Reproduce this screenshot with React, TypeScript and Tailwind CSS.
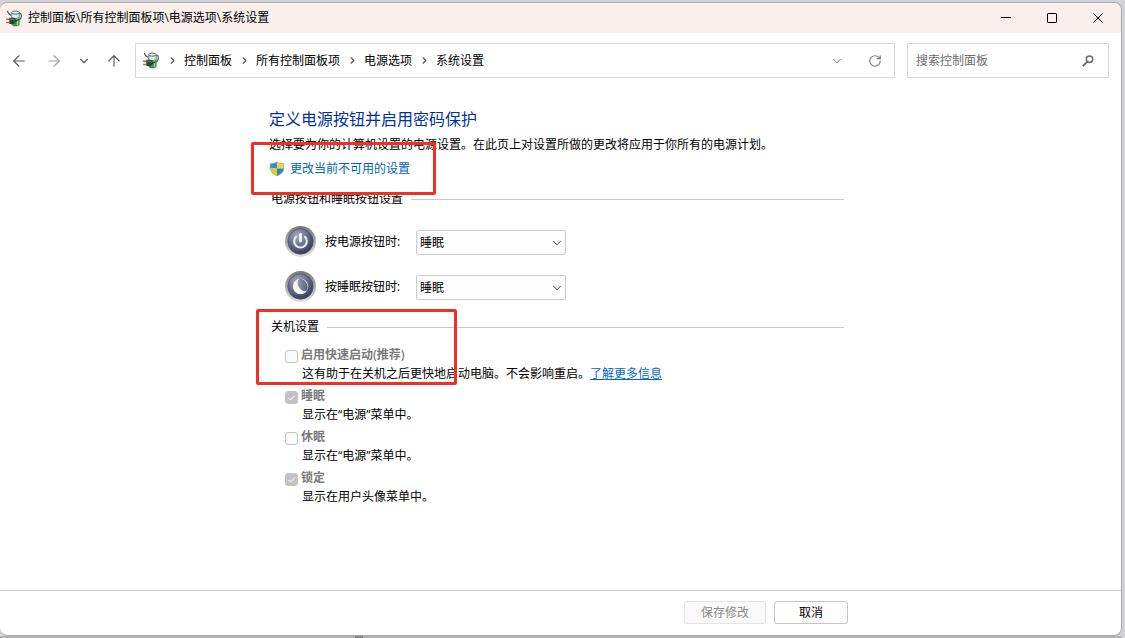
import React, { useState } from 'react';
import { ArrowLeft, ArrowRight, ArrowUp, ChevronDown, ChevronRight, RotateCw } from 'lucide-react';

const crumbs = ['控制面板', '所有控制面板项', '电源选项', '系统设置'];

const shutdownOptions = [
  { id: 'fast', label: '启用快速启动(推荐)', hint: '这有助于在关机之后更快地启动电脑。不会影响重启。', checked: false, link: '了解更多信息' },
  { id: 'sleep', label: '睡眠', hint: '显示在“电源”菜单中。', checked: true },
  { id: 'hibernate', label: '休眠', hint: '显示在“电源”菜单中。', checked: false },
  { id: 'lock', label: '锁定', hint: '显示在用户头像菜单中。', checked: true },
];

// Green battery with a plug in front of it
const PowerIcon: React.FC = () => (
  <svg width="17" height="17" viewBox="0 0 17 17" className="shrink-0" aria-hidden="true">
    <path d="M12.500 3.200c2.300-.3 3 1.200 2.800 3.300-.1 1.800-.9 2.800-2.300 3.500" fill="none" stroke="#59636a" strokeWidth="1.300" />
    <path d="M5.800 3v11.500c1.300 2 6.200 2 7.400 0V3z" fill="#35a046" />
    <path d="M5.800 3v4.200c2 1 5.400 1 7.400 0V3z" fill="#e3ebe8" />
    <path d="M10.800 7.600l1.500-.3v7.500l-1.500.6z" fill="#8be087" />
    <path d="M5.800 3v11.500c1.300 2 6.200 2 7.400 0V3" fill="none" stroke="#48685a" strokeWidth=".7" />
    <ellipse cx="9.500" cy="2.600" rx="3.700" ry="1.600" fill="#f1f4f5" stroke="#4a555c" strokeWidth=".9" />
    <path d="M1.300 1c.6 2.300 1.400 3.600 3.900 4.600" fill="none" stroke="#4b5155" strokeWidth="1.100" />
    <path d="M0 9.300h4M0 12.500h4" stroke="#a8793f" strokeWidth="1.400" />
    <path d="M3.400 7.800h3.100c2 0 3.300 1.200 3.300 3.100s-1.300 3.200-3.300 3.200H3.400z" fill="#3a3e40" />
    <path d="M4.400 9.200h2.200c1 0 1.600.5 1.800 1.200" fill="none" stroke="#84898c" />
    <path d="M9.300 11.500l3.200-2" stroke="#34393b" strokeWidth="1.300" />
  </svg>
);

const ShieldIcon: React.FC = () => (
  <svg width="16" height="16" viewBox="0 0 16 16" className="shrink-0" aria-hidden="true">
    <path d="M8 1C6 2.200 3.500 2.700 1.200 2.700v4.800H8z" fill="#2b93d8" />
    <path d="M8 1c2 1.200 4.500 1.700 6.800 1.700v4.800H8z" fill="#fbd32c" />
    <path d="M1.200 7.500H8v7.300C4.300 13.400 1.500 11 1.200 7.500z" fill="#f6c71e" />
    <path d="M14.800 7.500H8v7.300c3.700-1.400 6.500-3.800 6.800-7.300z" fill="#2787cc" />
    <path d="M8 1C6 2.200 3.500 2.700 1.200 2.700v4.400c0 3.900 2.800 6.200 6.800 7.700 4-1.500 6.800-3.800 6.800-7.700V2.700C12.500 2.700 10 2.200 8 1z" fill="none" stroke="#8d9370" strokeWidth=".5" />
  </svg>
);

const RoundButtonIcon: React.FC<{ kind: 'power' | 'sleep' }> = ({ kind }) => (
  <svg width="32" height="32" viewBox="0 0 32 32" className="shrink-0" aria-hidden="true">
    <defs>
      <linearGradient id={`ring-${kind}`} x1="0" y1="0" x2="0" y2="1">
        <stop offset="0" stopColor="#77787b" />
        <stop offset="1" stopColor="#dfe0e4" />
      </linearGradient>
      <radialGradient id={`face-${kind}`} cx=".38" cy=".28" r=".75">
        <stop offset="0" stopColor="#a9adc0" />
        <stop offset=".5" stopColor="#6d718b" />
        <stop offset="1" stopColor="#353853" />
      </radialGradient>
      <linearGradient id={`shade-${kind}`} x1="0" y1="0" x2="1" y2="1">
        <stop offset="0" stopColor="#a6abbe" />
        <stop offset="1" stopColor="#4a4f6e" />
      </linearGradient>
    </defs>
    <circle cx="15.500" cy="15.500" r="15.500" fill={`url(#ring-${kind})`} />
    <circle cx="15.500" cy="15.500" r="12.700" fill={`url(#face-${kind})`} stroke="#50536a" strokeWidth=".7" />
    {kind === 'power' ? (
      <g fill="none" strokeLinecap="round">
        <path d="M11 10.800a6.300 6.300 0 1 0 9 0" stroke="#e9eaef" strokeWidth="2.200" />
        <path d="M15.500 8.300v6.700" stroke="#f4f4f7" strokeWidth="2.800" />
      </g>
    ) : (
      <g>
        <circle cx="15.500" cy="15.500" r="7.700" fill="#f3f3f6" />
        <ellipse cx="17.600" cy="14" rx="4.300" ry="6.800" transform="rotate(-32 17.600 14)" fill={`url(#shade-${kind})`} />
      </g>
    )}
  </svg>
);

const SectionTitle: React.FC<{ children: React.ReactNode }> = ({ children }) => (
  <div className="flex items-center gap-2 pl-0.5">
    <h2 className="leading-4">{children}</h2>
    <div className="h-px flex-1 bg-[#c8c8c8]" />
  </div>
);

interface ActionRowProps {
  id: string;
  kind: 'power' | 'sleep';
  label: string;
}

const ActionRow: React.FC<ActionRowProps> = ({ id, kind, label }) => {
  const [action, setAction] = useState('睡眠');

  return (
    <div className="flex items-center">
      <RoundButtonIcon kind={kind} />
      <label htmlFor={id} className="w-[99px] pl-2">{label}</label>
      <div className="relative">
        <select
          id={id}
          value={action}
          onChange={(e) => setAction(e.target.value)}
          className="h-[25px] w-[150px] appearance-none rounded-xs border border-[#cccccc] bg-[#fdfdfd] pl-[3px] pr-6 pt-px text-black"
        >
          <option>不采取任何操作</option>
          <option>睡眠</option>
          <option>休眠</option>
          <option>关机</option>
        </select>
        <ChevronDown size={14} strokeWidth={1.800} className="pointer-events-none absolute right-0.5 top-1.5 text-[#5c5c5c]" />
      </div>
    </div>
  );
};

export default function App() {
  return (
    <div className="flex min-h-screen flex-col bg-[#d3d3d5] pr-[3px] pt-0.5 font-['Open_Sans','Noto_Sans_CJK_SC',sans-serif] text-xs text-black">
      <div className="flex flex-1 flex-col overflow-hidden rounded-lg border-b border-r border-t border-[#a8a8a8] bg-white">
        {/* Title bar */}
        <header className="flex h-[30px] items-center bg-[#f9f0ee] pl-1.5">
          <PowerIcon />
          <span className="flex-1 pl-[5px]">控制面板\所有控制面板项\电源选项\系统设置</span>
          <div className="flex h-full">
            <button aria-label="最小化" className="flex w-[46px] items-center justify-center">
              <svg width="10" height="10" viewBox="0 0 10 10"><path d="M0 4.500h10" stroke="#000" /></svg>
            </button>
            <button aria-label="最大化" className="flex w-[46px] items-center justify-center">
              <svg width="10" height="10" viewBox="0 0 10 10"><rect x=".5" y=".5" width="9" height="9" rx=".6" fill="none" stroke="#000" /></svg>
            </button>
            <button aria-label="关闭" className="flex w-[46px] items-center justify-center">
              <svg width="10" height="10" viewBox="0 0 10 10"><path d="M.3.3l9.400 9.400M9.700.3L.3 9.700" stroke="#000" /></svg>
            </button>
          </div>
        </header>

        {/* Navigation */}
        <nav className="flex items-center pl-1 pr-3 pt-2.5">
          <button aria-label="后退" className="mr-[5px] flex w-[30px] justify-center text-[#5a5a5a]"><ArrowLeft size={18} strokeWidth={1.500} /></button>
          <button aria-label="前进" className="flex w-[30px] justify-center text-[#a0a0a0]"><ArrowRight size={18} strokeWidth={1.500} /></button>
          <button aria-label="最近位置" className="flex w-[30px] justify-center text-[#5a5a5a]"><ChevronDown size={14} strokeWidth={2} /></button>
          <button aria-label="上移" className="mr-1.5 flex w-[30px] justify-center text-[#5a5a5a]"><ArrowUp size={18} strokeWidth={1.500} /></button>

          <div className="flex h-[35px] flex-1 items-center border border-[#d9d9d9] pl-[7px] pr-3">
            <PowerIcon />
            <ol className="flex flex-1">
              {crumbs.map((crumb) => (
                <li key={crumb} className="flex items-center">
                  <span className="flex w-6 justify-center text-[#555555]"><ChevronRight size={11} strokeWidth={2.500} /></span>
                  <a href="#">{crumb}</a>
                </li>
              ))}
            </ol>
            <button aria-label="历史记录" className="mr-6 text-[#6b6b6b]"><ChevronDown size={14} strokeWidth={1.600} /></button>
            <button aria-label="刷新" className="text-[#7a7a7a]"><RotateCw size={14} strokeWidth={2} /></button>
          </div>

          <div className="ml-3 flex h-[35px] w-[202px] items-center border border-[#d9d9d9] pl-2 pr-3.5">
            <input
              type="text"
              aria-label="搜索控制面板"
              placeholder="搜索控制面板"
              className="min-w-0 flex-1 outline-none placeholder:text-[#6d6d6d]"
            />
            <svg width="12" height="12" viewBox="0 0 12 12" fill="none" stroke="#6a6a6a" aria-hidden="true">
              <circle cx="7.500" cy="4.300" r="3.200" strokeWidth="1.500" />
              <path d="M5.200 6.800L.8 11.200" strokeWidth="1.800" />
            </svg>
          </div>
        </nav>

        {/* Settings */}
        <main className="flex-1 pl-[24%] pr-6 pt-[29px]">
          <div className="relative max-w-[575px]">
            <h1 className="text-base text-[#003399]">定义电源按钮并启用密码保护</h1>
            <p className="mt-1.5 whitespace-nowrap leading-4">选择要为你的计算机设置的电源设置。在此页上对设置所做的更改将应用于你所有的电源计划。</p>
            <a href="#" className="mt-2 flex w-fit items-center gap-[5px] leading-4 text-[#0066b8]">
              <ShieldIcon />
              更改当前不可用的设置
            </a>

            <section className="mt-3.5">
              <SectionTitle>电源按钮和睡眠按钮设置</SectionTitle>
              <div className="mt-[19px] flex flex-col gap-[13px] pl-4">
                <ActionRow id="power-action" kind="power" label="按电源按钮时:" />
                <ActionRow id="sleep-action" kind="sleep" label="按睡眠按钮时:" />
              </div>
            </section>

            <section className="mt-4">
              <SectionTitle>关机设置</SectionTitle>
              <ul className="mt-[11px] flex flex-col gap-1 pl-4 leading-[18px]">
                {shutdownOptions.map((option) => (
                  <li key={option.id}>
                    <div className="flex items-end gap-[3px]">
                      <span className="grid pb-px">
                        <input
                          id={option.id}
                          type="checkbox"
                          disabled
                          defaultChecked={option.checked}
                          className="peer col-start-1 row-start-1 size-[13px] appearance-none rounded-[3px] border border-[#c3c3c3] bg-[#fafafa] checked:bg-[#c3c3c3]"
                        />
                        <svg viewBox="0 0 13 13" className="pointer-events-none invisible col-start-1 row-start-1 size-[13px] peer-checked:visible">
                          <path d="M3.300 6.800l2.200 2.200 4.200-4.500" fill="none" stroke="#fff" />
                        </svg>
                      </span>
                      <label htmlFor={option.id} className="font-semibold text-[#7a7a7a]">{option.label}</label>
                    </div>
                    <p className="mt-px whitespace-nowrap pl-[17px]">
                      {option.hint}
                      {option.link && <a href="#" className="text-[#0066cc] underline">{option.link}</a>}
                    </p>
                  </li>
                ))}
              </ul>
            </section>

            {/* Highlight frames */}
            <div className="pointer-events-none absolute -left-[18px] top-[35px] h-[53px] w-[185px] rounded-xs border-3 border-[#ee3124]" />
            <div className="pointer-events-none absolute -left-[13px] top-[202px] h-[76px] w-[201px] rounded-xs border-3 border-[#ee3124]" />
          </div>
        </main>

        <footer className="flex justify-end gap-2 border-t border-[#c8c8c8] pb-[11px] pr-[273px] pt-2.5">
          <button disabled className="h-[23px] w-[82px] rounded-[3px] border border-[#e5e5e5] bg-[#f9f9f9] text-[#8b8b8b]">保存修改</button>
          <button className="h-[23px] w-[74px] rounded-[3px] border border-[#c6c6c6] bg-[#fdfdfd]">取消</button>
        </footer>
      </div>

      {/* Edge of the window behind */}
      <div className="h-0.5 bg-[#b3b3b3] pl-[355px]">
        <div className="h-full w-2 bg-[#858585]" />
      </div>
    </div>
  );
}
